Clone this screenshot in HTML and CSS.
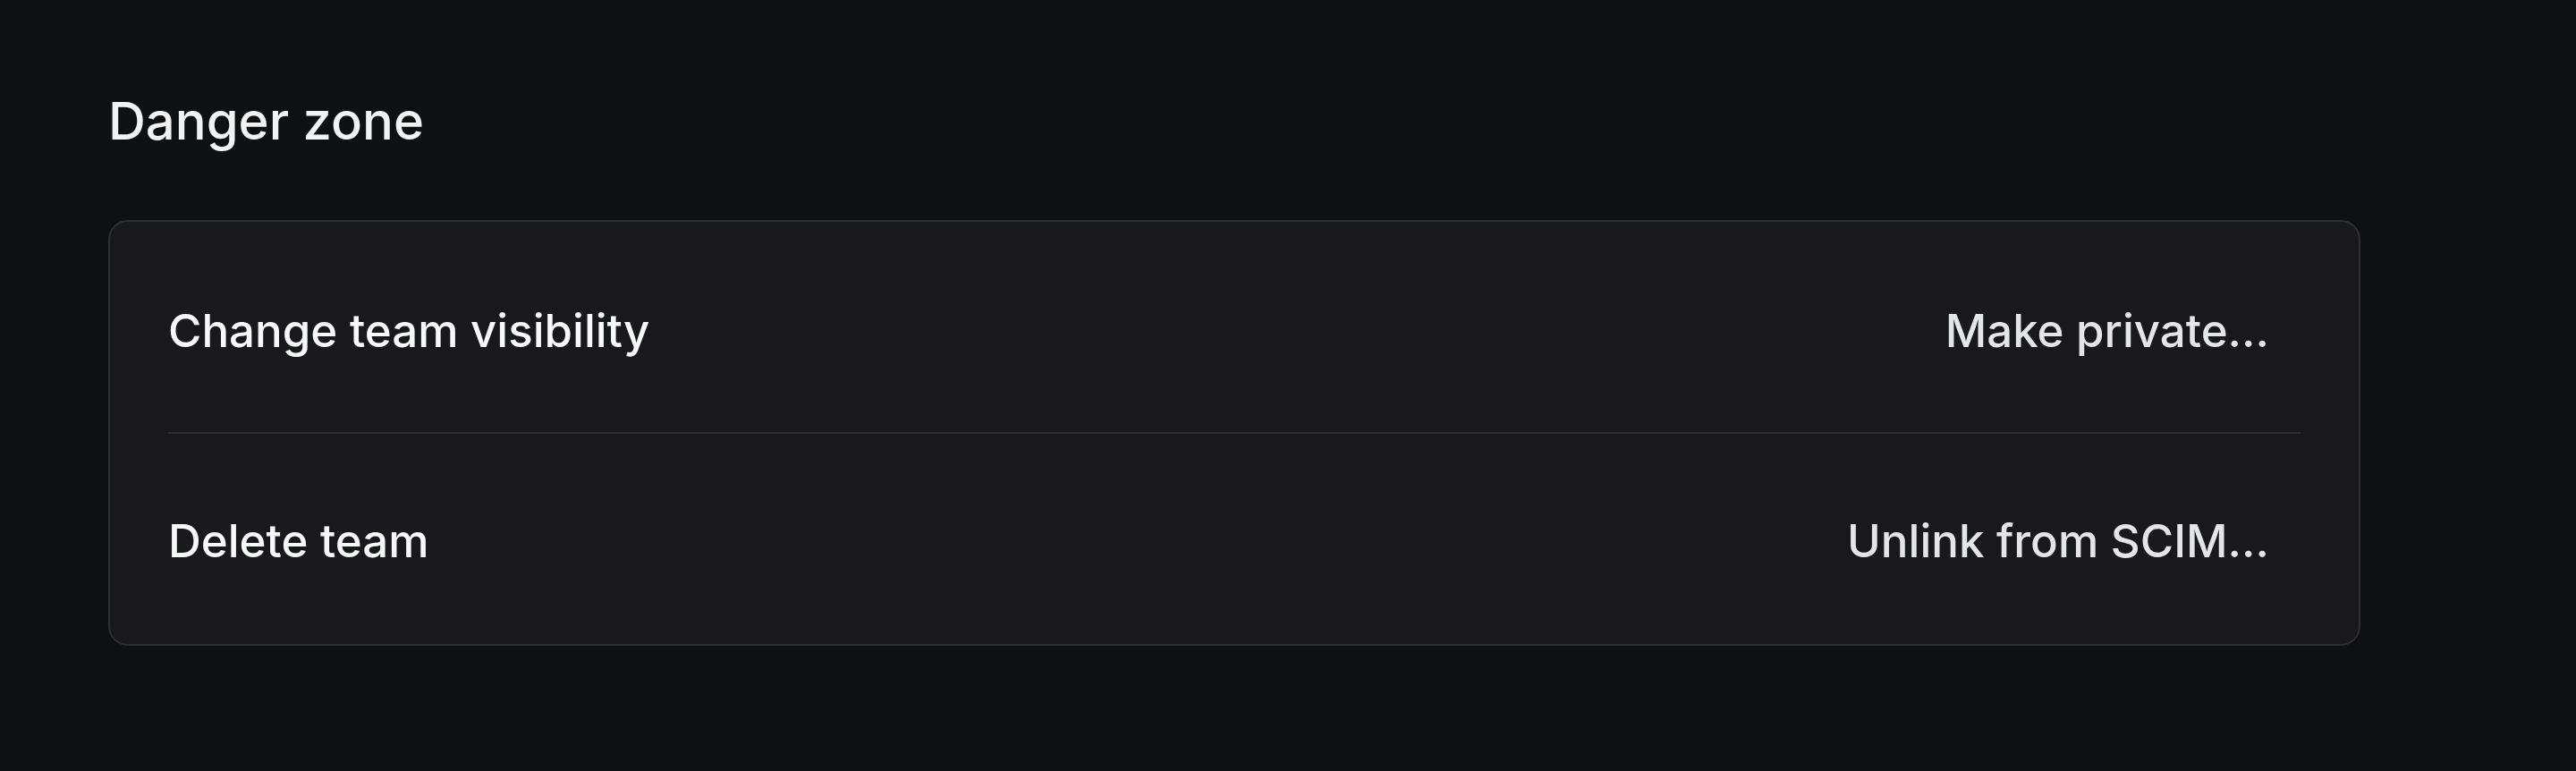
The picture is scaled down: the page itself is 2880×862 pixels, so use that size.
FILE: index.html
```html
<!DOCTYPE html>
<html>
<head>
    <title>Team settings</title>
    <link rel="stylesheet" href="styles.css">
</head>
<body>
    <div class="settings">
        <h2 class="section-title">Danger zone</h2>

        <div class="card">
            <div class="card-row">
                <span class="row-label">Change team visibility</span>
                <button class="row-action">Make private...</button>
            </div>
            <div class="card-row">
                <span class="row-label">Delete team</span>
                <button class="row-action">Unlink from SCIM...</button>
            </div>
        </div>
    </div>
</body>
</html>
```

FILE: styles.css
```css
body {
    margin: 0;
    background-color: #0f1011;
    font-family: Inter, "Noto Sans", sans-serif;
    color: #f7f8f8;
}
.settings {
    padding: 100px 0 0 121px;
}
.section-title {
    margin: 0 0 76px 0;
    font-size: 58px;
    font-weight: 500;
    line-height: 70px;
    color: #f2f2f3;
}
.card {
    box-sizing: border-box;
    width: 2518px;
    background-color: #19191b;
    border: 2px solid #2e2f34;
    border-radius: 22px;
}
.card-row {
    display: flex;
    align-items: center;
    justify-content: space-between;
    box-sizing: border-box;
    height: 235px;
    padding-top: 8px;
    margin: 0 65px;
}
.card-row + .card-row {
    height: 237px;
    padding-top: 5px;
    border-top: 2px solid #2e2f34;
}
.row-label {
    font-size: 51px;
    font-weight: 500;
    line-height: 62px;
}
.row-action {
    background: transparent;
    border: none;
    border-radius: 12px;
    padding: 18px 35px 18px 40px;
    font-family: inherit;
    font-size: 51px;
    font-weight: 500;
    line-height: 62px;
    color: #e4e5e8;
    cursor: pointer;
}
.row-action:hover {
    background-color: #222326;
}
```
